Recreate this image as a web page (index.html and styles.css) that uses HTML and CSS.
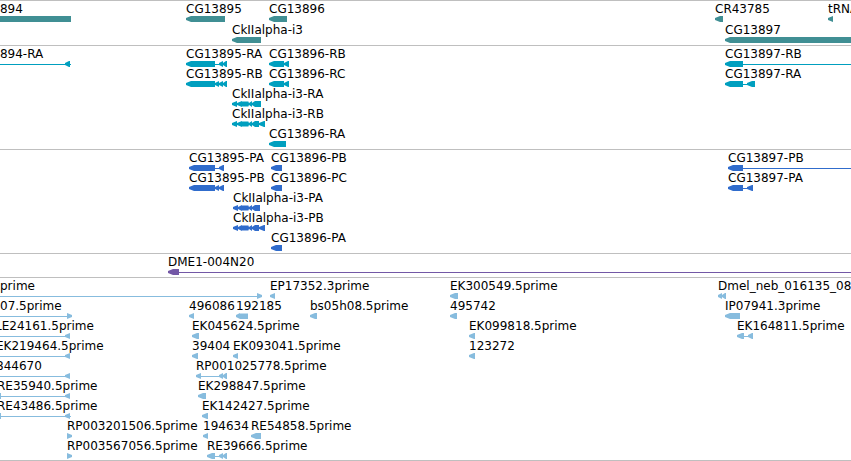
FILE: index.html
```
<!DOCTYPE html>
<html lang="en">
<head>
    <meta charset="UTF-8">
    <meta name="viewport" content="width=device-width, initial-scale=1.0">
    <title>Genome Browser</title>
    <link rel="stylesheet" href="styles.css">
</head>
<body>
    <main class="browser">

        <!-- genes -->
        <section class="track genes">
            <div class="row">
                <div class="feature" style="left: -33px"><span>CG13894</span><svg class="glyph"><path d="M0 0H104V6H0z"/></svg></div>
                <div class="feature" style="left: 186px"><span>CG13895</span><svg class="glyph"><path d="M0 2 5 0H39V6H5L0 4z"/></svg></div>
                <div class="feature" style="left: 269px"><span>CG13896</span><svg class="glyph"><path d="M0 2 5 0H18V6H5L0 4z"/></svg></div>
                <div class="feature" style="left: 715px"><span>CR43785</span><svg class="glyph"><path d="M0 2 5 0H8V6H5L0 4z"/></svg></div>
                <div class="feature" style="left: 828px"><span>tRNA</span><svg class="glyph"><path d="M0 2 5 0V6L0 4z"/></svg></div>
            </div>
            <div class="row">
                <div class="feature" style="left: 232px"><span>CkIIalpha-i3</span><svg class="glyph"><path d="M0 2 5 0H29V6H5L0 4z"/></svg></div>
                <div class="feature open" style="left: 725px"><span>CG13897</span><svg class="glyph"><path d="M0 2 5 0H6V6H5L0 4z"/><rect x="5" width="100%" height="6"/></svg></div>
            </div>
        </section>

        <!-- transcripts -->
        <section class="track transcripts">
            <div class="row">
                <div class="feature" style="left: -33px"><span>CG13894-RA</span><svg class="glyph"><path d="M0 3H98V2L102 0H103V3H104V4H103V6H102L98 4H0z"/></svg></div>
                <div class="feature" style="left: 186px"><span>CG13895-RA</span><svg class="glyph"><path d="M0 2 5 0H29V3H33V2L37 0V2L40 0H41V6H40L37 4V6L33 4H29V6H5L0 4z"/></svg></div>
                <div class="feature" style="left: 269px"><span>CG13896-RB</span><svg class="glyph"><path d="M0 2 5 0H15V2L19 0H20V6H19L15 4V6H5L0 4z"/></svg></div>
                <div class="feature open" style="left: 725px"><span>CG13897-RB</span><svg class="glyph"><path d="M0 2 5 0H18V6H5L0 4z"/><rect x="18" y="3" width="100%" height="1"/></svg></div>
            </div>
            <div class="row">
                <div class="feature" style="left: 186px"><span>CG13895-RB</span><svg class="glyph"><path d="M0 2 5 0H29V2L33 0V2L37 0V2L40 0H41V6H40L37 4V6L33 4V6L29 4V6H5L0 4z"/></svg></div>
                <div class="feature" style="left: 269px"><span>CG13896-RC</span><svg class="glyph"><path d="M0 2 5 0H15V2L19 0H20V6H19L15 4V6H5L0 4z"/></svg></div>
                <div class="feature" style="left: 725px"><span>CG13897-RA</span><svg class="glyph"><path d="M0 2 5 0H18V3H22V2L27 0H30V6H27L22 4H18V6H5L0 4z"/></svg></div>
            </div>
            <div class="row">
                <div class="feature" style="left: 232px"><span>CkIIalpha-i3-RA</span><svg class="glyph"><path d="M0 2 5 0V2L10 0 11 1 12 0 13 1 14 0 15 1 16 0 17 2 20 0V2L23 0H29V6H23L20 4V6L17 4 16 6 15 5 14 6 13 5 12 6 11 5 10 6 5 4V6L0 4z"/></svg></div>
            </div>
            <div class="row">
                <div class="feature" style="left: 232px"><span>CkIIalpha-i3-RB</span><svg class="glyph"><path d="M0 2 5 0V2L10 0 11 1 12 0 13 1 14 0 15 1 16 0 17 2 20 0V2L23 0H27V2L32 0H33V6H32L27 4V6H23L20 4V6L17 4 16 6 15 5 14 6 13 5 12 6 11 5 10 6 5 4V6L0 4z"/></svg></div>
            </div>
            <div class="row">
                <div class="feature" style="left: 269px"><span>CG13896-RA</span><svg class="glyph"><path d="M0 2 5 0H17V6H5L0 4z"/></svg></div>
            </div>
        </section>

        <!-- proteins -->
        <section class="track proteins">
            <div class="row">
                <div class="feature" style="left: 189px"><span>CG13895-PA</span><svg class="glyph"><path d="M0 2 5 0H26V3H30V2L34 0H35V6H34L30 4H26V6H5L0 4z"/></svg></div>
                <div class="feature" style="left: 271px"><span>CG13896-PB</span><svg class="glyph"><path d="M0 2 5 0H11V6H5L0 4z"/></svg></div>
                <div class="feature open" style="left: 728px"><span>CG13897-PB</span><svg class="glyph"><path d="M0 2 5 0H15V6H5L0 4z"/><rect x="15" y="3" width="100%" height="1"/></svg></div>
            </div>
            <div class="row">
                <div class="feature" style="left: 189px"><span>CG13895-PB</span><svg class="glyph"><path d="M0 2 5 0H26V2L30 0V2L34 0H35V6H34L30 4V6L26 4V6H5L0 4z"/></svg></div>
                <div class="feature" style="left: 271px"><span>CG13896-PC</span><svg class="glyph"><path d="M0 2 5 0H11V6H5L0 4z"/></svg></div>
                <div class="feature" style="left: 728px"><span>CG13897-PA</span><svg class="glyph"><path d="M0 2 5 0H15V3H19V2L24 0H25V6H24L19 4H15V6H5L0 4z"/></svg></div>
            </div>
            <div class="row">
                <div class="feature" style="left: 233px"><span>CkIIalpha-i3-PA</span><svg class="glyph"><path d="M0 2 5 0V2L9 0 10 1 11 0 12 1 13 0 14 1 15 0 16 2 19 0V2L22 0H27V6H22L19 4V6L16 4 15 6 14 5 13 6 12 5 11 6 10 5 9 6 5 4V6L0 4z"/></svg></div>
            </div>
            <div class="row">
                <div class="feature" style="left: 233px"><span>CkIIalpha-i3-PB</span><svg class="glyph"><path d="M0 2 5 0V2L9 0 10 1 11 0 12 1 13 0 14 1 15 0 16 2 19 0V2L22 0H26V2L31 0H32V6H31L26 4V6H22L19 4V6L16 4 15 6 14 5 13 6 12 5 11 6 10 5 9 6 5 4V6L0 4z"/></svg></div>
            </div>
            <div class="row">
                <div class="feature" style="left: 271px"><span>CG13896-PA</span><svg class="glyph"><path d="M0 2 5 0H11V6H5L0 4z"/></svg></div>
            </div>
        </section>

        <!-- clones -->
        <section class="track clones">
            <div class="row">
                <div class="feature open" style="left: 168px"><span>DME1-004N20</span><svg class="glyph"><path d="M0 2 5 0H11V6H5L0 4z"/><rect x="11" y="3" width="100%" height="1"/></svg></div>
            </div>
        </section>

        <!-- ESTs -->
        <section class="track ests">
            <div class="row">
                <div class="feature" style="left: 0px"><span>prime</span><svg class="glyph"><path d="M0 3H257V0L262 2V4L257 6V4H0z"/></svg></div>
                <div class="feature" style="left: 270px"><span>EP17352.3prime</span><svg class="glyph"><path d="M0 2 5 0V6L0 4z"/></svg></div>
                <div class="feature" style="left: 450px"><span>EK300549.5prime</span><svg class="glyph"><path d="M0 2 5 0H8V6H5L0 4z"/></svg></div>
                <div class="feature" style="left: 718px"><span>Dmel_neb_016135_08</span><svg class="glyph"><path d="M0 2 4 0V2L7 0H8V6H7L4 4V6L0 4z"/></svg></div>
            </div>
            <div class="row">
                <div class="feature" style="left: 0px"><span>07.5prime</span><svg class="glyph"><path d="M0 3H67V0L72 2V4L67 6V4H0z"/></svg></div>
                <div class="feature" style="left: 189px"><span>496086</span><svg class="glyph"><path d="M0 2 5 0V6L0 4z"/></svg></div>
                <div class="feature" style="left: 236px"><span>192185</span><svg class="glyph"><path d="M0 2 4 0 5 1 6 0 7 1 8 0 9 1 10 0 11 1 12 0V6H4L0 4z"/></svg></div>
                <div class="feature" style="left: 310px"><span>bs05h08.5prime</span><svg class="glyph"><path d="M0 2 5 0H7V6H5L0 4z"/></svg></div>
                <div class="feature" style="left: 450px"><span>495742</span><svg class="glyph"><path d="M0 2 5 0H7V6H5L0 4z"/></svg></div>
                <div class="feature" style="left: 725px"><span>IP07941.3prime</span><svg class="glyph"><path d="M0 2 5 0H15V6H5L0 4z"/></svg></div>
            </div>
            <div class="row">
                <div class="feature" style="left: -5px"><span>LE24161.5prime</span><svg class="glyph"><path d="M0 3H70V2L75 0V6L70 4H0z"/></svg></div>
                <div class="feature" style="left: 192px"><span>EK045624.5prime</span><svg class="glyph"><path d="M0 2 5 0H7V6H5L0 4z"/></svg></div>
                <div class="feature" style="left: 469px"><span>EK099818.5prime</span><svg class="glyph"><path d="M0 2 5 0H6V6H5L0 4z"/></svg></div>
                <div class="feature" style="left: 737px"><span>EK164811.5prime</span><svg class="glyph"><path d="M0 2 5 0H7V3H11V2L15 0H16V6H15L11 4H7V6H5L0 4z"/></svg></div>
            </div>
            <div class="row">
                <div class="feature" style="left: -4px"><span>EK219464.5prime</span><svg class="glyph"><path d="M0 3H69V2L74 0V6L69 4H0z"/></svg></div>
                <div class="feature" style="left: 192px"><span>39404</span><svg class="glyph"><path d="M0 2 5 0H6V6H5L0 4z"/></svg></div>
                <div class="feature" style="left: 233px"><span>EK093041.5prime</span><svg class="glyph"><path d="M0 2 5 0V6L0 4z"/></svg></div>
                <div class="feature" style="left: 469px"><span>123272</span><svg class="glyph"><path d="M0 2 5 0H6V6H5L0 4z"/></svg></div>
            </div>
            <div class="row">
                <div class="feature" style="left: -4px"><span>844670</span><svg class="glyph"><path d="M0 3H69V2L74 0V6L69 4H0z"/></svg></div>
                <div class="feature" style="left: 196px"><span>RP001025778.5prime</span><svg class="glyph"><path d="M0 2 5 0V3H23V2L27 0V2L30 0H31V6H30L27 4V6L23 4H5V6L0 4z"/></svg></div>
            </div>
            <div class="row">
                <div class="feature" style="left: -3px"><span>RE35940.5prime</span><svg class="glyph"><path d="M0 0H4V3H68V2L73 0V6L68 4H4V6H0z"/></svg></div>
                <div class="feature" style="left: 198px"><span>EK298847.5prime</span><svg class="glyph"><path d="M0 2 5 0H8V6H5L0 4z"/></svg></div>
            </div>
            <div class="row">
                <div class="feature" style="left: -3px"><span>RE43486.5prime</span><svg class="glyph"><path d="M0 0H4V3H68V2L73 0V3H74V4H73V6L68 4H4V6H0z"/></svg></div>
                <div class="feature" style="left: 202px"><span>EK142427.5prime</span><svg class="glyph"><path d="M0 2 5 0H6V6H5L0 4z"/></svg></div>
            </div>
            <div class="row">
                <div class="feature" style="left: 67px"><span>RP003201506.5prime</span><svg class="glyph"><path d="M0 0 5 2V4L0 6z"/></svg></div>
                <div class="feature" style="left: 203px"><span>194634</span><svg class="glyph"><path d="M0 2 5 0V6L0 4z"/></svg></div>
                <div class="feature" style="left: 251px"><span>RE54858.5prime</span><svg class="glyph"><path d="M0 2 5 0H10V6H5L0 4z"/></svg></div>
            </div>
            <div class="row">
                <div class="feature" style="left: 67px"><span>RP003567056.5prime</span><svg class="glyph"><path d="M0 0 5 2V4L0 6z"/></svg></div>
                <div class="feature" style="left: 207px"><span>RE39666.5prime</span><svg class="glyph"><path d="M0 2 5 0H8V3H12V2L16 0V2L19 0H20V6H19L16 4V6L12 4H8V6H5L0 4z"/></svg></div>
            </div>
        </section>

    </main>
</body>
</html>
```
FILE: styles.css
```
* {
    margin: 0;
    padding: 0;
    box-sizing: border-box;
}

body {
    background-color: white;
    color: black;
    font-family: "DejaVu Sans", Verdana, sans-serif;
    font-size: 12px;
    line-height: 14px;
}

.browser {
    width: 100%;
    border-bottom: 1px solid #bfbfbf;
}

.track {
    display: flex;
    flex-direction: column;
    padding-bottom: 3px;
    border-top: 1px solid #bfbfbf;
    overflow: hidden;
}

.row {
    position: relative;
    height: 20px;
}

/* left comes from the feature's start on the sequence */
.feature {
    position: absolute;
    top: 0;
    white-space: nowrap;
}

.feature span {
    display: block;
    padding-top: 1px;
}

.glyph {
    display: block;
    width: 1px;
    height: 6px;
    overflow: visible;
    fill: currentColor;
}

/* feature runs on past the right edge */
.open {
    right: 0;
}

.open .glyph {
    width: 100%;
}

.genes,
.ests {
    padding-bottom: 2px;
}

.genes .row {
    height: 21px;
}

.genes .glyph {
    color: #408f94;
}

.transcripts .glyph {
    color: #009fbf;
}

.proteins .glyph {
    color: #306ccc;
}

.clones .glyph {
    color: #7358a6;
}

.ests .glyph {
    color: #87bcde;
}
```
